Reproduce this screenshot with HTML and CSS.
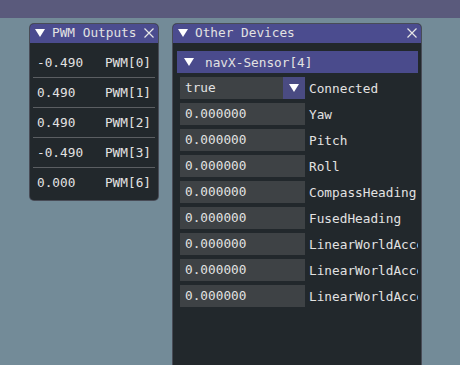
FILE: index.html
```html
<!DOCTYPE html>
<html>
<head>
<meta charset="utf-8">
<link rel="stylesheet" href="styles.css">
</head>
<body>
<div class="menubar"></div>
<div class="desktop">
  <div class="win win-pwm">
    <div class="titlebar">
      <svg class="tri" width="10" height="8" viewBox="0 0 10 8"><polygon points="0,0 10,0 5,8" fill="#ffffff"/></svg>
      <span class="title">PWM Outputs</span>
      <svg class="close" width="10" height="10" viewBox="0 0 10 10"><path d="M0.5 0.5 L9.5 9.5 M9.5 0.5 L0.5 9.5" stroke="#e6e6e6" stroke-width="1.2"/></svg>
    </div>
    <div class="pwm-body">
      <div class="pwm-row"><span class="val">-0.490</span><span class="lbl">PWM[0]</span></div>
      <div class="pwm-row"><span class="val">0.490</span><span class="lbl">PWM[1]</span></div>
      <div class="pwm-row"><span class="val">0.490</span><span class="lbl">PWM[2]</span></div>
      <div class="pwm-row"><span class="val">-0.490</span><span class="lbl">PWM[3]</span></div>
      <div class="pwm-row last"><span class="val">0.000</span><span class="lbl">PWM[6]</span></div>
    </div>
  </div>

  <div class="win win-other">
    <div class="titlebar">
      <svg class="tri" width="10" height="8" viewBox="0 0 10 8"><polygon points="0,0 10,0 5,8" fill="#ffffff"/></svg>
      <span class="title">Other Devices</span>
      <svg class="close" width="10" height="10" viewBox="0 0 10 10"><path d="M0.5 0.5 L9.5 9.5 M9.5 0.5 L0.5 9.5" stroke="#e6e6e6" stroke-width="1.2"/></svg>
    </div>
    <div class="other-body">
      <div class="header">
        <svg class="tri" width="10" height="8" viewBox="0 0 10 8"><polygon points="0,0 10,0 5,8" fill="#ffffff"/></svg>
        <span class="htext">navX-Sensor[4]</span>
      </div>
      <div class="field">
        <div class="combo"><span class="ctext">true</span><span class="cbtn"><svg width="10" height="8" viewBox="0 0 10 8"><polygon points="0,0 10,0 5,8" fill="#ffffff"/></svg></span></div>
        <span class="flabel">Connected</span>
      </div>
      <div class="field"><div class="input">0.000000</div><span class="flabel">Yaw</span></div>
      <div class="field"><div class="input">0.000000</div><span class="flabel">Pitch</span></div>
      <div class="field"><div class="input">0.000000</div><span class="flabel">Roll</span></div>
      <div class="field"><div class="input">0.000000</div><span class="flabel">CompassHeading</span></div>
      <div class="field"><div class="input">0.000000</div><span class="flabel">FusedHeading</span></div>
      <div class="field"><div class="input">0.000000</div><span class="flabel">LinearWorldAccelX</span></div>
      <div class="field"><div class="input">0.000000</div><span class="flabel">LinearWorldAccelY</span></div>
      <div class="field"><div class="input">0.000000</div><span class="flabel">LinearWorldAccelZ</span></div>
    </div>
  </div>
</div>
</body>
</html>
```
FILE: styles.css
```css
html, body {
  margin: 0;
  padding: 0;
}
body {
  width: 460px;
  height: 365px;
  overflow: hidden;
  background: #738b98;
  font-family: "DejaVu Sans Mono", monospace;
  font-size: 12.75px;
  color: #e2e2e2;
}
.menubar {
  height: 18px;
  background: #5a5a7c;
}
.desktop {
  position: relative;
  height: 347px;
}
.win {
  position: absolute;
  top: 5px;
  background: #22282c;
  border: 1px solid rgba(120, 120, 140, 0.45);
  border-radius: 5px;
  box-sizing: border-box;
  overflow: hidden;
}
.win-pwm {
  left: 29px;
  width: 130px;
  height: 178px;
}
.win-other {
  left: 172px;
  width: 250px;
  height: 360px;
}
.titlebar {
  height: 20px;
  background: #4b4c8f;
  display: flex;
  align-items: center;
  padding: 0 5px 0 6px;
  margin: -1px -1px 0 -1px;
}
.titlebar .tri {
  flex: none;
  margin-right: 7px;
}
.title {
  flex: 1;
  white-space: nowrap;
  line-height: 20px;
}
.close {
  flex: none;
}
.pwm-body {
  padding: 5px 3px 0 3px;
}
.pwm-row {
  height: 29px;
  border-bottom: 1px solid #5b5e62;
  display: flex;
  align-items: center;
  padding: 0 4px 0 4px;
}
.pwm-row.last {
  border-bottom: none;
}
.pwm-row .val {
  width: 69px;
}
.other-body {
  padding: 8px 3px 0 4px;
  display: flex;
  flex-direction: column;
  gap: 4px;
}
.header {
  height: 22px;
  background: #4a4b8c;
  display: flex;
  align-items: center;
  padding-left: 7px;
}
.header .tri {
  margin-right: 11px;
}
.field {
  display: flex;
  align-items: center;
  height: 22px;
  padding-left: 3px;
  white-space: nowrap;
  overflow: hidden;
}
.input, .combo {
  flex: none;
  width: 125px;
  height: 22px;
  background: #3e4245;
  box-sizing: border-box;
  padding-left: 5px;
  line-height: 22px;
  margin-right: 4px;
}
.combo {
  display: flex;
  padding-left: 0;
}
.ctext {
  flex: 1;
  padding-left: 5px;
}
.cbtn {
  width: 22px;
  height: 22px;
  background: #4a4b82;
  display: flex;
  align-items: center;
  justify-content: center;
}
.flabel {
  white-space: nowrap;
}
```
